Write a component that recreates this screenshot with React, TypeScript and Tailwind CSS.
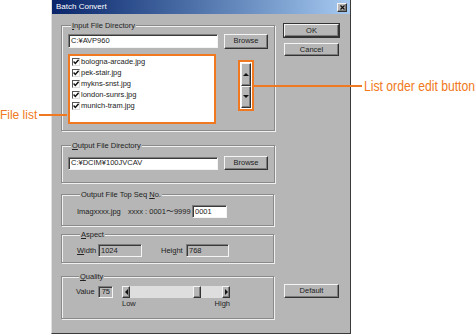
import React from "react";

const BG = "bg-[#b6b6b6]";

const Btn = ({
  children,
  className = "",
  isDefault = false,
}: {
  children?: React.ReactNode;
  className?: string;
  isDefault?: boolean;
}) => (
  <div
    className={`flex items-center justify-center ${BG} border border-t-[#f4f4f4] border-l-[#f4f4f4] border-r-[#333] border-b-[#333] shadow-[inset_-1px_-1px_0_#7c7c7c] ${
      isDefault ? "outline outline-1 outline-[#333]" : ""
    } ${className}`}
  >
    {children}
  </div>
);

const Field = ({
  value,
  className = "",
  gray = false,
}: {
  value: string;
  className?: string;
  gray?: boolean;
}) => (
  <div
    className={`flex items-center px-[2px] border border-t-[#7c7c7c] border-l-[#7c7c7c] border-r-[#f4f4f4] border-b-[#f4f4f4] shadow-[inset_1px_1px_0_#3a3a3a] ${
      gray ? BG : "bg-white"
    } ${className}`}
  >
    {value}
  </div>
);

const Group = ({
  legend,
  className = "",
  children,
}: {
  legend: React.ReactNode;
  className?: string;
  children: React.ReactNode;
}) => (
  <fieldset
    className={`border border-[#8a8a8a] shadow-[inset_1px_1px_0_#f0f0f0,1px_1px_0_#f0f0f0] ${className}`}
  >
    <legend className={`ml-[3px] px-[1px] leading-[9px] ${BG}`}>{legend}</legend>
    {children}
  </fieldset>
);

const Check = () => (
  <span className="flex w-[8px] h-[8px] items-center justify-center bg-white border border-t-[#555] border-l-[#555] border-r-[#ddd] border-b-[#ddd]">
    <svg width="6" height="6" viewBox="0 0 6 6">
      <path d="M0.6 2.6 L2.3 4.4 L5.6 0.8" stroke="#111" strokeWidth="1.4" fill="none" />
    </svg>
  </span>
);

const Arrow = ({ dir }: { dir: "up" | "down" | "left" | "right" }) => {
  const vertical = dir === "up" || dir === "down";
  const pts = {
    up: "0,4 3,1 6,4",
    down: "0,1 3,4 6,1",
    left: "4,0 1,3 4,6",
    right: "1,0 4,3 1,6",
  }[dir];
  return (
    <svg
      width={vertical ? 6 : 5}
      height={vertical ? 5 : 6}
      viewBox={vertical ? "0 0 6 5" : "0 0 5 6"}
    >
      <polygon points={pts} fill="#111" />
    </svg>
  );
};

const files = [
  "bologna-arcade.jpg",
  "pek-stair.jpg",
  "mykns-snst.jpg",
  "london-sunrs.jpg",
  "munich-tram.jpg",
];

export default function App() {
  return (
    <div className="relative w-[476px] h-[336px] overflow-hidden bg-white font-['Liberation_Sans',Arial,sans-serif] text-[7.5px] text-[#222]">
      {/* dialog window */}
      <div className={`ml-[51px] w-[300px] h-[334px] flex flex-col ${BG} border-l border-l-[#e0e0e0] border-r border-r-[#3a3a3a] border-b border-b-[#3a3a3a]`}>
        {/* title bar */}
        <div className="h-[14px] flex items-center justify-between pl-[4px] pr-[3px] bg-linear-to-r from-[#0a246a] to-[#a6caf0]">
          <span className="text-white text-[8px]">Batch Convert</span>
          <Btn className="w-[10px] h-[9px]">
            <svg width="5" height="5" viewBox="0 0 5 5">
              <path d="M0.5 0.5 L4.5 4.5 M4.5 0.5 L0.5 4.5" stroke="#111" strokeWidth="1.2" />
            </svg>
          </Btn>
        </div>

        <div className="flex pl-[9px]">
          {/* left column */}
          <div className="w-[213px] flex flex-col">
            <Group
              className="mt-[7px] px-[6px] pt-[4px] pb-[6px]"
              legend={
                <>
                  <u>I</u>nput File Directory
                </>
              }
            >
              <div className="flex items-center gap-[6px] h-[14px]">
                <Field value="C:¥AVP960" className="w-[150px] h-[14px]" />
                <Btn className="w-[44px] h-[15px]">Browse</Btn>
              </div>
              <div className="flex mt-[6px]">
                <div className="w-[148px] h-[70px] border-2 border-[#f07820] bg-white pl-[2px]">
                  {files.map((f) => (
                    <div key={f} className="flex items-center gap-[1px] h-[11px]">
                      <Check />
                      <span>{f}</span>
                    </div>
                  ))}
                </div>
                <div className="ml-[22px] mt-[6px] w-[16px] h-[51px] border-2 border-[#f07820] bg-white p-px flex flex-col">
                  <Btn className="flex-1">
                    <Arrow dir="up" />
                  </Btn>
                  <Btn className="flex-1">
                    <Arrow dir="down" />
                  </Btn>
                </div>
              </div>
            </Group>

            <Group
              className="mt-[10px] px-[6px] pt-[6px] pb-[12px]"
              legend={
                <>
                  <u>O</u>utput File Directory
                </>
              }
            >
              <div className="flex items-center gap-[6px]">
                <Field value="C:¥DCIM¥100JVCAV" className="w-[150px] h-[13px]" />
                <Btn className="w-[44px] h-[14px]">Browse</Btn>
              </div>
            </Group>

            <Group
              className="mt-[7px] pl-[15px] pt-[6px] pb-[7px]"
              legend={
                <>
                  Output File Top Seq <u>N</u>o.
                </>
              }
            >
              <div className="flex items-center">
                <span className="w-[51px]">Imagxxxx.jpg</span>
                <span className="w-[64px]">xxxx : 0001〜9999</span>
                <Field value="0001" className="w-[35px] h-[13px]" />
              </div>
            </Group>

            <Group
              className="mt-[4px] pl-[15px] pt-[5px] pb-[5px]"
              legend={
                <>
                  <u>A</u>spect
                </>
              }
            >
              <div className="flex items-center">
                <span className="w-[21px]">
                  <u>W</u>idth
                </span>
                <Field value="1024" gray className="w-[44px] h-[13px]" />
                <span className="ml-[19px] w-[25px]">
                  Hei<u>g</u>ht
                </span>
                <Field value="768" gray className="w-[43px] h-[13px]" />
              </div>
            </Group>

            <Group
              className="mt-[9px] pl-[14px] pt-[5px] pb-[10px]"
              legend={
                <>
                  <u>Q</u>uality
                </>
              }
            >
              <div className="flex">
                <span className="w-[22px] h-[12px] flex items-center">Value</span>
                <Field value="75" gray className="w-[15px] h-[12px] justify-end" />
                <div className="ml-[9px] flex flex-col">
                  <div className="flex h-[12px]">
                    <Btn className="w-[8px] h-full">
                      <Arrow dir="left" />
                    </Btn>
                    <div className="w-[92px] h-full bg-[#dedede] pl-[63px]">
                      <Btn className="w-[8px] h-full" />
                    </div>
                    <Btn className="w-[8px] h-full">
                      <Arrow dir="right" />
                    </Btn>
                  </div>
                  <div className="flex justify-between mt-[1px] leading-[9px]">
                    <span>Low</span>
                    <span>High</span>
                  </div>
                </div>
              </div>
            </Group>
          </div>

          {/* right column */}
          <div className="ml-[10px] w-[55px] flex flex-col">
            <Btn isDefault className="mt-[10px] h-[13px]">
              OK
            </Btn>
            <Btn className="mt-[6px] h-[13px]">Cancel</Btn>
            <Btn className="mt-[228px] h-[14px]">Default</Btn>
          </div>
        </div>
      </div>

      {/* callouts */}
      <div className="absolute left-0 top-[108px] flex items-center text-[#f07820] text-[13px] leading-[14px]">
        <span className="w-[41px] whitespace-nowrap origin-left scale-x-[0.92]">File list</span>
        <span className="-ml-[2px] w-[28px] h-[2px] bg-[#f07820]" />
      </div>
      <div className="absolute left-[252px] top-[79px] flex items-center text-[#f07820] text-[14px] leading-[14px] whitespace-nowrap">
        <span className="w-[110px] h-[2px] bg-[#f07820]" />
        <span className="ml-[2px] origin-left scale-x-[0.87]">List order edit button</span>
      </div>
    </div>
  );
}
